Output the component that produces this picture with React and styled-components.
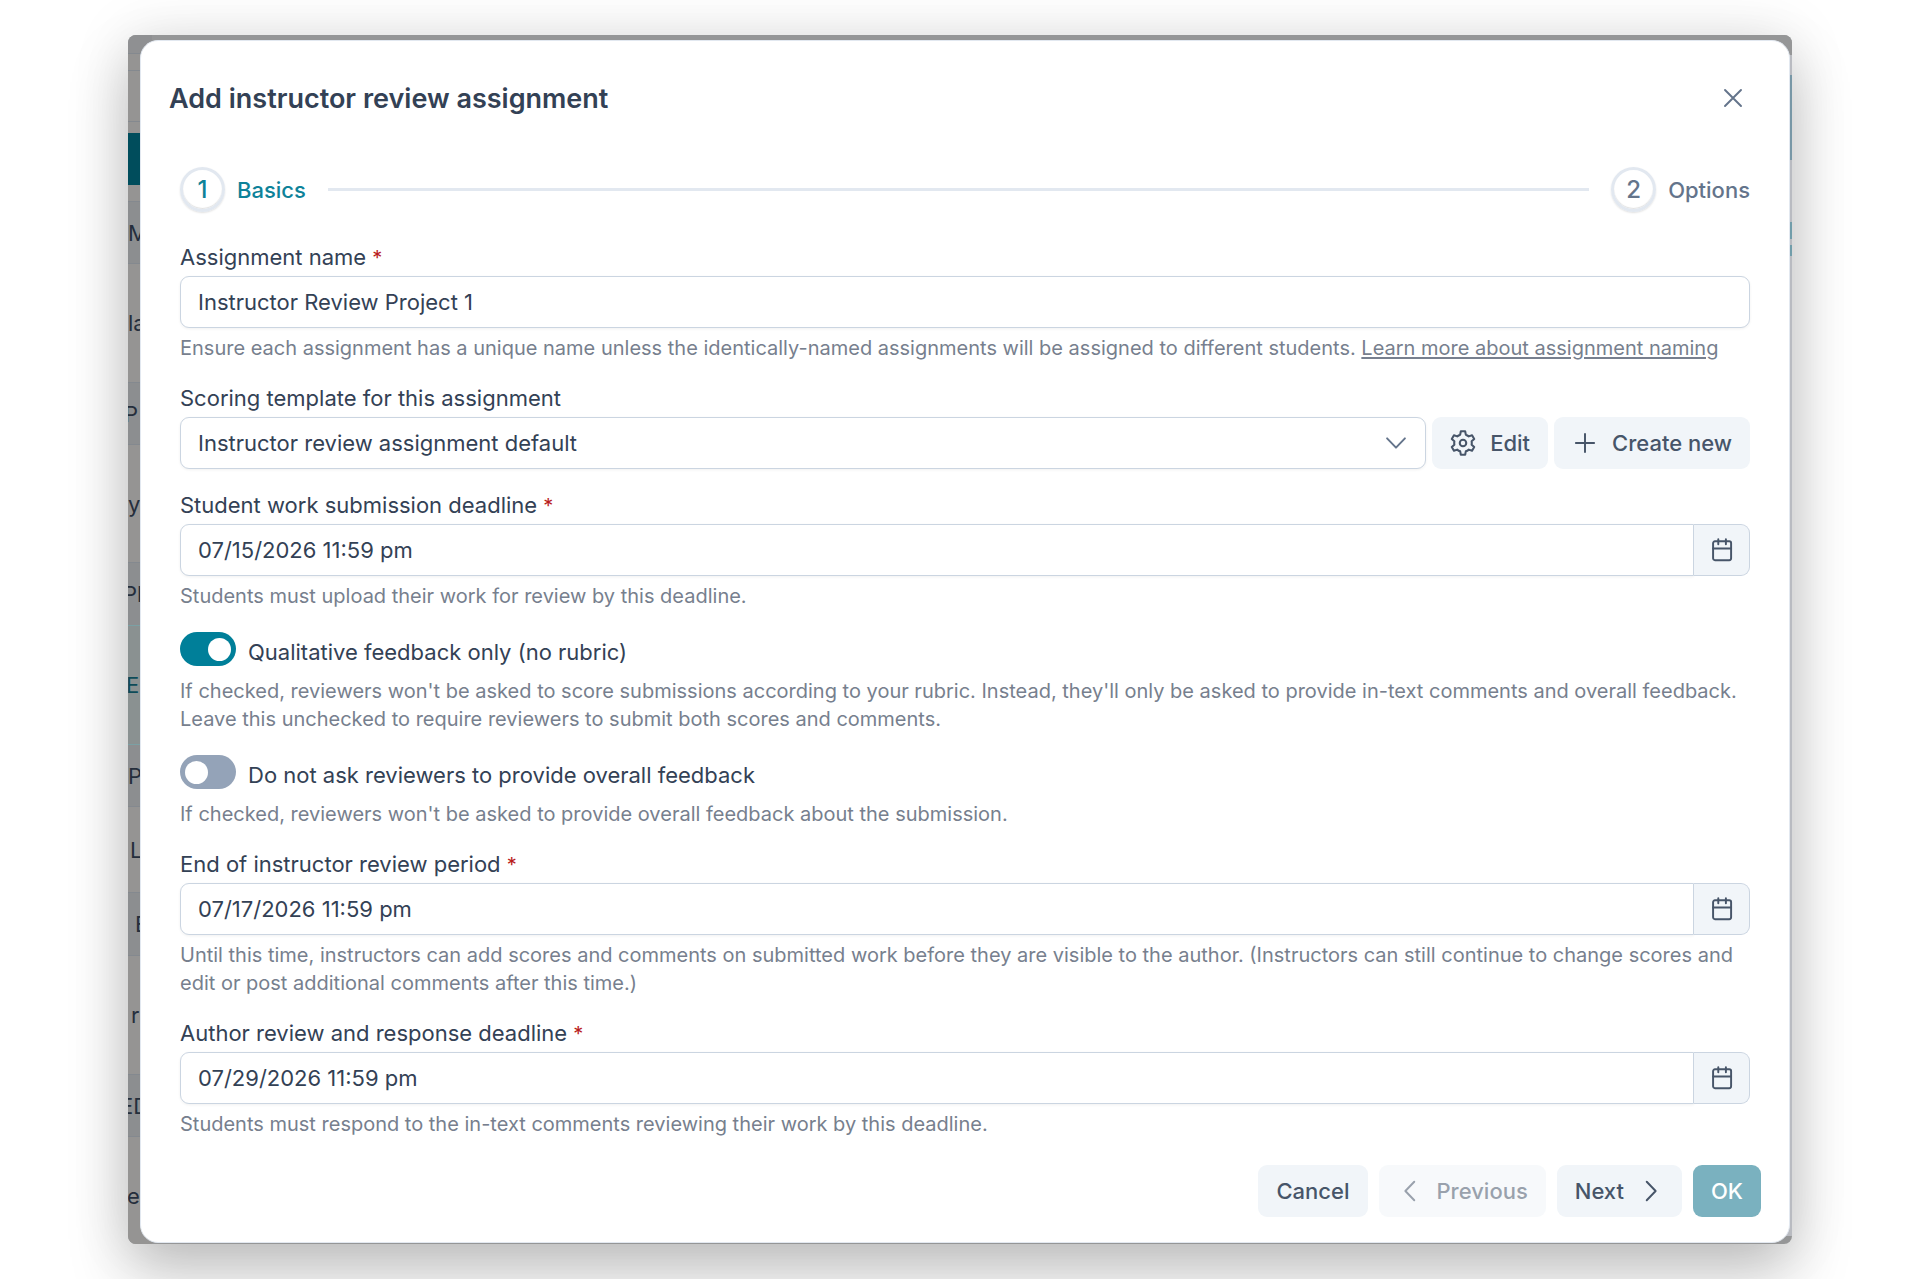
import React, { useState } from 'react'
import styled, { createGlobalStyle } from 'styled-components'

const GlobalStyle = createGlobalStyle`
    * {
        box-sizing: border-box;
    }

    body {
        margin: 0;
        background: #fff;
        color: #334155;
        font-family: Inter, "Liberation Sans", sans-serif;
        font-size: 22px;
        line-height: 28px;
    }

    button, input, select {
        font: inherit;
        color: inherit;
    }
`;

const Stage = styled.main`
    padding: 35px 128px;
    overflow: hidden;
`;

const Backdrop = styled.div`
    position: relative;
    padding: 5px 2px 1px 12px;
    border-radius: 8px;
    background: #959697;
    box-shadow: 0 30px 60px rgba(0, 0, 0, 0.22), 0 0 60px rgba(0, 0, 0, 0.1);
`;

// slice of the dimmed page that shows beside the dialog
const PageEdge = styled.div`
    position: absolute;
    top: 0;
    bottom: 0;
    ${props => props.side}: 0;
    width: 24px;
    overflow: hidden;
    border-radius: ${props => props.side === 'left' ? '8px 0 0 8px' : '0 8px 8px 0'};
`;

const EdgeRow = styled.div`
    display: flex;
    align-items: center;
    height: ${props => props.height}px;
    background: ${props => props.fill || '#959493'};
    border-bottom: 1px solid ${props => props.line || '#84898f'};
    color: ${props => props.ink || '#252e3c'};
    text-indent: ${props => props.indent || 0}px;
    white-space: nowrap;
`;

const Dialog = styled.section`
    position: relative;
    border: 1px solid #e2e8f0;
    border-radius: 18px;
    background: #fff;
    overflow: hidden;
`;

const Header = styled.header`
    display: flex;
    align-items: flex-start;
    justify-content: space-between;
    padding: 40px 39px 0 28px;
`;

const Title = styled.h1`
    margin: 0;
    font-size: 27px;
    line-height: 36px;
    font-weight: 600;
`;

const CloseButton = styled.button`
    display: flex;
    padding: 4px;
    border: 0;
    background: none;
    color: #64748b;
    cursor: pointer;
`;

const Form = styled.form`
    display: flex;
    flex-direction: column;
    gap: 22px;
    padding: 50px 39px 0;
`;

const Steps = styled.ol`
    display: flex;
    align-items: center;
    gap: 22px;
    margin: 0 0 9px;
    padding: 0;
    list-style: none;
`;

const Step = styled.li`
    display: flex;
    align-items: center;
    gap: 12px;
    font-weight: 500;
    color: ${props => props.$active ? '#0e8299' : '#64748b'};
`;

const StepNumber = styled.span`
    display: flex;
    align-items: center;
    justify-content: center;
    width: 45px;
    height: 45px;
    border: 3px solid #e2e8f0;
    border-radius: 50%;
    font-size: 24px;
    box-shadow: 0 1px 2px rgba(0, 0, 0, 0.12), inset 0 -1px 1px rgba(0, 0, 0, 0.12);
`;

const StepLine = styled.li`
    flex: 1;
    height: 3px;
    background: #e2e8f0;
`;

const FieldBox = styled.div`
    display: flex;
    flex-direction: column;
`;

const Label = styled.label`
    margin-bottom: 5px;
`;

const Required = styled.span`
    color: #b91c1c;
    font-size: 20px;
    line-height: 1;
`;

const Help = styled.p`
    margin: 6px 0 0;
    font-size: 20px;
    color: #777f8e;

    a {
        color: inherit;
        text-underline-offset: 2px;
    }
`;

const TextInput = styled.input`
    flex: 1;
    min-width: 0;
    height: 52px;
    padding: 0 17px;
    border: 1px solid #cbd5e1;
    border-radius: ${props => props.$grouped ? '9px 0 0 9px' : '9px'};
    background: #fff;
    box-shadow: 0 1px 3px rgba(18, 18, 23, 0.06);
`;

const Row = styled.div`
    display: flex;
    gap: ${props => props.$gap || 0}px;
`;

const CalendarButton = styled.button`
    display: flex;
    align-items: center;
    justify-content: center;
    width: 56px;
    border: 1px solid #cbd5e1;
    border-left: 0;
    border-radius: 0 9px 9px 0;
    background: #f1f5f9;
    color: #475569;
    cursor: pointer;
`;

const SelectWrap = styled.div`
    flex: 1;
    display: grid;
    align-items: center;

    > * {
        grid-area: 1 / 1;
    }

    > svg {
        justify-self: end;
        margin-right: 17px;
        color: #64748b;
        pointer-events: none;
    }
`;

const Select = styled.select`
    appearance: none;
    width: 100%;
    height: 52px;
    padding: 0 56px 0 17px;
    border: 1px solid #cbd5e1;
    border-radius: 9px;
    background: #fff;
    box-shadow: 0 1px 3px rgba(18, 18, 23, 0.06);
`;

const Button = styled.button`
    display: flex;
    align-items: center;
    gap: 14px;
    height: 52px;
    padding: 0 18px;
    border: 0;
    border-radius: 9px;
    background: ${props => props.$primary ? '#0f738b' : '#f1f5f9'};
    color: ${props => props.$primary ? '#fff' : '#475569'};
    font-weight: 500;
    cursor: pointer;

    &:disabled {
        opacity: 0.55;
        cursor: default;
    }
`;

const SwitchRow = styled.div`
    display: flex;
    align-items: flex-end;
    gap: 12px;
    margin-bottom: 5px;

    ${Label} {
        margin: 0;
    }
`;

const Switch = styled.input`
    appearance: none;
    display: flex;
    align-items: center;
    width: 56px;
    height: 34px;
    margin: 0;
    padding: 0 5px;
    border-radius: 17px;
    background: #94a3b8;
    cursor: pointer;

    &::before {
        content: '';
        width: 23px;
        height: 23px;
        border-radius: 50%;
        background: #fff;
    }

    &:checked {
        justify-content: flex-end;
        background: #007f99;
    }
`;

const Footer = styled.footer`
    display: flex;
    justify-content: flex-end;
    gap: 11px;
    padding: 27px 28px 25px;
`;

const Icon = ({ children }) => (
    <svg width="26" height="26" viewBox="0 0 14 14" fill="none" stroke="currentColor" strokeWidth="1.05" strokeLinecap="round" strokeLinejoin="round" aria-hidden="true">
        {children}
    </svg>
)

const Calendar = () => (
    <Icon>
        <rect x="2.2" y="2.3" width="9.7" height="10.2" rx="1" />
        <path d="M2.2 6.2h9.7M5 1.2v2.7M9.1 1.2v2.7" />
    </Icon>
)

const Gear = () => (
    <svg width="26" height="26" viewBox="0 0 24 24" fill="none" stroke="currentColor" strokeWidth="1.9" strokeLinejoin="round" aria-hidden="true">
        <path d="M10 1.2h4l.6 3.1q1.4.5 2.77 1.6l2.98-1.03 2 3.46-2.38 2.07q.3 1.6 0 3.2l2.38 2.07-2 3.46-2.98-1.03q-1.37 1.1-2.77 1.6l-.6 3.1h-4l-.6-3.1q-1.4-.5-2.77-1.6l-2.98 1.03-2-3.46 2.38-2.07q-.3-1.6 0-3.2l-2.38-2.07 2-3.46 2.98 1.03q1.37-1.1 2.77-1.6z" />
        <circle cx="12" cy="12" r="3" />
    </svg>
)

const leftEdge = [
    { height: 19, fill: '#8f9092' },
    { height: 17 },
    { height: 51 },
    { height: 11, line: '#959493' },
    { height: 52, fill: '#004d5c', line: '#004d5c' },
    { height: 17 },
    { height: 62, fill: '#8c8e90', text: 'M' },
    { height: 119, text: 'la' },
    { height: 62, fill: '#8c8e90', text: 'P', indent: -4 },
    { height: 118, text: 'y' },
    { height: 63, fill: '#8c8e90', text: 'Pl', indent: -5, line: '#7ba0a4' },
    { height: 119, fill: '#8a9191', text: 'E', indent: -2, ink: '#0d4b58', line: '#7ba0a4' },
    { height: 62, fill: '#8c8e90', text: 'P' },
    { height: 86, text: 'L', indent: 2 },
    { height: 63, fill: '#8c8e90', text: 'E', indent: 7 },
    { height: 119, text: 'r', indent: 3 },
    { height: 62, fill: '#8c8e90', text: 'ED', indent: -8 },
    { height: 119, text: 'e', indent: -1, line: '#959493' }
]

const rightEdge = [
    { height: 20, fill: '#959697', line: '#959697' },
    { height: 20, fill: '#b9bbc1', line: '#b9bbc1' },
    { height: 85, fill: '#7897a6', line: '#7897a6' },
    { height: 62, fill: '#b9bbc1', line: '#b9bbc1' },
    { height: 17, fill: '#719daa', line: '#719daa' },
    { height: 6, fill: '#b9bbc1', line: '#b9bbc1' },
    { height: 11, fill: '#719daa', line: '#719daa' },
    { height: 980, fill: '#b9bbc1', line: '#b9bbc1' }
]

const Edge = ({ side, rows }) => (
    <PageEdge side={side} aria-hidden="true">
        {rows.map(({ text, ...row }, key) => (
            <EdgeRow key={key} {...row}>{text}</EdgeRow>
        ))}
    </PageEdge>
)

const DateField = ({ id, label, value, help }) => (
    <FieldBox>
        <Label htmlFor={id}>{label} <Required>*</Required></Label>
        <Row>
            <TextInput id={id} $grouped defaultValue={value} />
            <CalendarButton type="button" aria-label="Choose date"><Calendar /></CalendarButton>
        </Row>
        <Help>{help}</Help>
    </FieldBox>
)

const SwitchField = ({ id, label, checked, help }) => {
    const [on, setOn] = useState(checked)

    return (
        <FieldBox>
            <SwitchRow>
                <Switch id={id} type="checkbox" role="switch" checked={on} onChange={() => setOn(!on)} />
                <Label htmlFor={id}>{label}</Label>
            </SwitchRow>
            <Help>{help}</Help>
        </FieldBox>
    )
}

const App = () => {
    return (
        <Stage>
            <GlobalStyle />
            <Backdrop>
                <Edge side="left" rows={leftEdge} />
                <Edge side="right" rows={rightEdge} />
                <Dialog role="dialog" aria-labelledby="dialog-title">
                    <Header>
                        <Title id="dialog-title">Add instructor review assignment</Title>
                        <CloseButton type="button" aria-label="Close">
                            <Icon><path d="M2.7 2.7l8.6 8.6M11.3 2.7l-8.6 8.6" /></Icon>
                        </CloseButton>
                    </Header>
                    <Form id="assignment-form">
                        <Steps>
                            <Step $active><StepNumber>1</StepNumber>Basics</Step>
                            <StepLine role="presentation" />
                            <Step><StepNumber>2</StepNumber>Options</Step>
                        </Steps>
                        <FieldBox>
                            <Label htmlFor="name">Assignment name <Required>*</Required></Label>
                            <Row><TextInput id="name" defaultValue="Instructor Review Project 1" /></Row>
                            <Help>
                                Ensure each assignment has a unique name unless the identically-named assignments will be assigned to different students. <a href="#naming">Learn more about assignment naming</a>
                            </Help>
                        </FieldBox>
                        <FieldBox>
                            <Label htmlFor="template">Scoring template for this assignment</Label>
                            <Row $gap={6}>
                                <SelectWrap>
                                    <Select id="template">
                                        <option>Instructor review assignment default</option>
                                    </Select>
                                    <Icon><path d="M2.2 4.5l4.8 5 4.8-5" /></Icon>
                                </SelectWrap>
                                <Button type="button"><Gear />Edit</Button>
                                <Button type="button"><Icon><path d="M7 2.1v9.8M2.1 7h9.8" /></Icon>Create new</Button>
                            </Row>
                        </FieldBox>
                        <DateField
                            id="submission"
                            label="Student work submission deadline"
                            value="07/15/2026 11:59 pm"
                            help="Students must upload their work for review by this deadline."
                        />
                        <SwitchField
                            id="qualitative"
                            label="Qualitative feedback only (no rubric)"
                            checked={true}
                            help="If checked, reviewers won't be asked to score submissions according to your rubric. Instead, they'll only be asked to provide in-text comments and overall feedback. Leave this unchecked to require reviewers to submit both scores and comments."
                        />
                        <SwitchField
                            id="overall"
                            label="Do not ask reviewers to provide overall feedback"
                            checked={false}
                            help="If checked, reviewers won't be asked to provide overall feedback about the submission."
                        />
                        <DateField
                            id="review-end"
                            label="End of instructor review period"
                            value="07/17/2026 11:59 pm"
                            help="Until this time, instructors can add scores and comments on submitted work before they are visible to the author. (Instructors can still continue to change scores and edit or post additional comments after this time.)"
                        />
                        <DateField
                            id="response"
                            label="Author review and response deadline"
                            value="07/29/2026 11:59 pm"
                            help="Students must respond to the in-text comments reviewing their work by this deadline."
                        />
                    </Form>
                    <Footer>
                        <Button type="button">Cancel</Button>
                        <Button type="button" disabled><Icon><path d="M9.3 2l-4.8 5 4.8 5" /></Icon>Previous</Button>
                        <Button type="button">Next<Icon><path d="M4.7 2l4.8 5-4.8 5" /></Icon></Button>
                        <Button type="submit" form="assignment-form" $primary disabled>OK</Button>
                    </Footer>
                </Dialog>
            </Backdrop>
        </Stage>
    )
}

export default App
